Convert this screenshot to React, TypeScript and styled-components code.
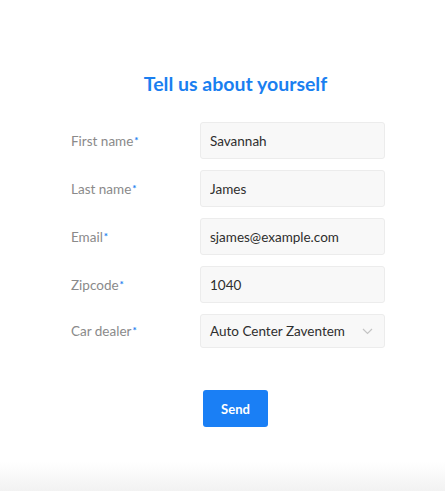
import React from 'react';
import styled, { createGlobalStyle } from 'styled-components';

const GlobalStyle = createGlobalStyle`
    html, body {
        margin: 0;
        padding: 0;
        background: #ffffff;
    }
    body {
        font-family: Lato, 'Noto Sans', sans-serif;
    }
`;

const Page = styled.div`
    min-height: 491px;
    box-sizing: border-box;
    padding: 70px 0 0 71px;
    background: linear-gradient(
        to bottom,
        #ffffff 0,
        #ffffff 462px,
        #f2f2f2 491px
    );
`;

const Panel = styled.div`
    width: 329px;
    display: flex;
    flex-direction: column;
    align-items: center;
`;

const Title = styled.h1`
    margin: 0 0 24px;
    font-size: 19.5px;
    line-height: 28px;
    font-weight: 700;
    color: #1a7ff0;
`;

const Form = styled.form`
    align-self: stretch;
    display: grid;
    grid-template-columns: 129px 185px;
    row-gap: 11px;
    align-items: center;
`;

const Label = styled.label`
    font-size: 13.5px;
    color: #8a8a8a;
`;

const Required = styled.span`
    color: #1a7ff0;
    font-size: 10px;
    font-weight: 700;
    vertical-align: 2px;
    margin-left: 1px;
`;

const fieldBase = `
    box-sizing: border-box;
    width: 185px;
    margin: 0;
    padding: 0 9px;
    border: 1px solid #ececec;
    border-radius: 3px;
    background: #f8f8f8;
    font-family: Lato, 'Noto Sans', sans-serif;
    font-size: 13.5px;
    color: #2e2e2e;
    outline: none;
`;

const TextInput = styled.input`
    ${fieldBase}
    height: 37px;
`;

const SelectBox = styled.div`
    ${fieldBase}
    height: 34px;
    display: flex;
    align-items: center;
    justify-content: space-between;
    padding-right: 11px;
`;

const Chevron = styled.svg`
    width: 11px;
    height: 7px;
    flex-shrink: 0;
`;

const SendButton = styled.button`
    margin-top: 42px;
    width: 65px;
    height: 37px;
    border: none;
    border-radius: 3px;
    background: #1a7ff5;
    color: #ffffff;
    font-family: Lato, 'Noto Sans', sans-serif;
    font-size: 13px;
    font-weight: 700;
    cursor: pointer;
`;

const fields = [
    { label: 'First name', value: 'Savannah' },
    { label: 'Last name', value: 'James' },
    { label: 'Email', value: 'sjames@example.com' },
    { label: 'Zipcode', value: '1040' },
];

export default function App() {
    return (
        <>
            <GlobalStyle />
            <Page>
                <Panel>
                    <Title>Tell us about yourself</Title>
                    <Form onSubmit={(e) => e.preventDefault()}>
                        {fields.map((f) => (
                            <React.Fragment key={f.label}>
                                <Label>
                                    {f.label}
                                    <Required>*</Required>
                                </Label>
                                <TextInput defaultValue={f.value} />
                            </React.Fragment>
                        ))}
                        <Label>
                            Car dealer
                            <Required>*</Required>
                        </Label>
                        <SelectBox>
                            <span>Auto Center Zaventem</span>
                            <Chevron viewBox="0 0 11 7">
                                <path
                                    d="M1 1l4.5 4.5L10 1"
                                    fill="none"
                                    stroke="#c4c4c4"
                                    strokeWidth="1.2"
                                />
                            </Chevron>
                        </SelectBox>
                    </Form>
                    <SendButton type="button">Send</SendButton>
                </Panel>
            </Page>
        </>
    );
}
